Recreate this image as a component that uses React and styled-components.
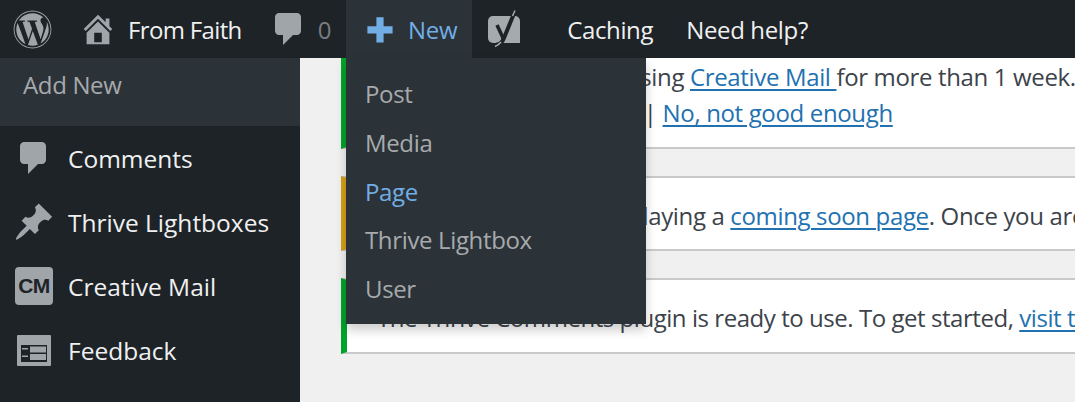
import React from "react";
import styled, { createGlobalStyle } from "styled-components";
import { FaWordpress } from "react-icons/fa";

const GlobalStyle = createGlobalStyle`
  html, body {
    margin: 0;
    padding: 0;
    width: 1075px;
    height: 402px;
    overflow: hidden;
    background: #f0f0f0;
  }
  * {
    box-sizing: border-box;
  }
`;

const Page = styled.div`
  width: 1075px;
  height: 402px;
  overflow: hidden;
  position: relative;
  font-family: "Open Sans", "Noto Sans", sans-serif;
  font-size: 24px;
  letter-spacing: -0.35px;
`;

const AdminBar = styled.div`
  height: 58px;
  background: #1d2327;
  display: flex;
  align-items: center;
`;

const BarItem = styled.div`
  height: 58px;
  display: flex;
  align-items: center;
  gap: ${(p) => p.gap || 0}px;
  margin-left: ${(p) => p.left || 0}px;
  padding: ${(p) => p.pad || 0};
  color: ${(p) => p.color || "#f0f0f1"};
  background: ${(p) => p.bg || "transparent"};
  letter-spacing: ${(p) => p.spacing || "inherit"};
`;

const BarIcon = styled.svg`
  width: ${(p) => p.size || 34}px;
  height: ${(p) => p.size || 34}px;
  fill: ${(p) => p.color || "#a0a5aa"};
  flex-shrink: 0;
`;

const Body = styled.div`
  display: flex;
  height: 344px;
`;

const Sidebar = styled.div`
  width: 300px;
  background: #1d2327;
  flex-shrink: 0;
`;

const SubMenu = styled.div`
  height: 68px;
  background: #2c3338;
  color: #a7aaad;
  padding: 10px 0 0 23px;
`;

const MenuRow = styled.div`
  height: 64px;
  display: flex;
  align-items: center;
  color: #f0f0f1;
  font-size: 24.5px;
  letter-spacing: 0;
`;

const MenuIconBox = styled.div`
  width: 68px;
  display: flex;
  justify-content: center;
`;

const CmBadge = styled.div`
  width: 38px;
  height: 38px;
  border-radius: 4px;
  background: #a0a5aa;
  color: #1d2327;
  font-family: "Liberation Sans", Arial, sans-serif;
  font-size: 21px;
  font-weight: 700;
  letter-spacing: -0.5px;
  display: flex;
  align-items: center;
  justify-content: center;
`;

const Content = styled.div`
  flex: 1;
  padding-left: 41px;
  color: #3c434a;
  overflow: hidden;
`;

const Notice = styled.div`
  background: #fff;
  border-left: 6px solid ${(p) => p.accent};
  border-bottom: 2px solid #c8c9cb;
  border-top: ${(p) => (p.first ? "0" : "2px solid #c8c9cb")};
  height: ${(p) => p.h}px;
  margin-bottom: 27px;
  padding: ${(p) => p.pad};
  white-space: nowrap;
`;

const NoticeLine = styled.div`
  line-height: 36px;
  letter-spacing: ${(p) => (p.tight ? "-0.45px" : "inherit")};
`;

const NoticeLink = styled.a`
  color: #2271b1;
  text-decoration: underline;
  text-decoration-thickness: 2px;
  text-underline-offset: 3px;
`;

const Dropdown = styled.div`
  position: absolute;
  left: 346px;
  top: 58px;
  width: 300px;
  height: 266px;
  background: #2c3338;
  box-shadow: 0 6px 10px rgba(0, 0, 0, 0.2);
  padding-top: 12px;
`;

const DropdownItem = styled.div`
  height: 48.75px;
  line-height: 48.75px;
  padding-left: 19px;
  color: ${(p) => (p.active ? "#72aee6" : "#a7aaad")};
`;

const WpIcon = styled(FaWordpress)`
  width: 39px;
  height: 39px;
  color: #a0a5aa;
  flex-shrink: 0;
`;

const YoastSvg = styled.svg`
  width: 32px;
  height: 38px;
  flex-shrink: 0;
`;

const homePath =
  "M16 8.5l1.53 1.53-1.06 1.06L10 4.62l-6.47 6.47-1.06-1.06L10 2.5l4 4v-2h2v4zm-6-2.46l6 5.99V18H4v-5.97zM12 17v-5H8v5h4z";
const commentPath =
  "M5 2h9c1.1 0 2 .9 2 2v7c0 1.1-.9 2-2 2h-2l-5 5v-5H5c-1.1 0-2-.9-2-2V4c0-1.1.9-2 2-2z";
const pinPath =
  "M10.44 3.02l1.82-1.82 6.36 6.35-1.83 1.82c-1.05-.68-2.48-.57-3.41.36l-.75.75c-.92.93-1.04 2.35-.35 3.41l-1.83 1.82-2.41-2.41-2.8 2.79c-.42.42-3.38 2.71-3.8 2.29s1.86-3.39 2.28-3.81l2.79-2.79L4.1 9.36l1.83-1.82c1.05.69 2.48.57 3.4-.36l.75-.75c.93-.92 1.05-2.35.36-3.41z";
const plusPath = "M17 7.5v5h-5v5H8v-5H3v-4h5v-5h4v5h5z";

const YoastIcon = () => (
  <YoastSvg viewBox="0 0 32 38">
    <path
      d="M6 6h21a5 5 0 0 1 5 5v22H10a5 5 0 0 1-5-5l-5 0V11a5 5 0 0 1 6-5z"
      fill="#a7aaad"
    />
    <path d="M0 28h8v5H5a5 5 0 0 1-5-5z" fill="#a7aaad" />
    <path
      d="M27 1L16 28c-1.500 4-3.500 6.500-8 7"
      fill="none"
      stroke="#1d2327"
      strokeWidth="4"
    />
    <path d="M9 15l6.500 14" fill="none" stroke="#1d2327" strokeWidth="3.500" />
    <path
      d="M27 0.500L24.500 6M13 32c-1.500 2-3 3.500-6 4.500"
      fill="none"
      stroke="#a7aaad"
      strokeWidth="1.500"
    />
  </YoastSvg>
);

const FeedbackSvg = styled.svg`
  width: 34px;
  height: 31px;
  flex-shrink: 0;
`;

const FeedbackIcon = () => (
  <FeedbackSvg viewBox="0 0 34 31">
    <rect width="34" height="31" rx="1" fill="#a0a5aa" />
    <path d="M4 10h26v17H4z" fill="#1d2327" />
    <path d="M13 11.500h16v6H13zM13 19h16v6H13z" fill="#a0a5aa" />
    <path d="M5 13h6v1.500H5zM5 20.500h6v1.500H5z" fill="#a0a5aa" />
  </FeedbackSvg>
);

const App = () => {
  return (
    <Page>
      <GlobalStyle />
      <AdminBar>
        <BarItem left={13}>
          <WpIcon />
        </BarItem>
        <BarItem left={27} gap={11} spacing="-0.65px">
          <BarIcon viewBox="0 0 20 20" size={38}>
            <path d={homePath} />
          </BarIcon>
          From Faith
        </BarItem>
        <BarItem left={27} gap={9} color="#787c82">
          <BarIcon viewBox="0 0 20 20" size={40}>
            <path d={commentPath} />
          </BarIcon>
          0
        </BarItem>
        <BarItem left={15} pad="0 15px 0 16px" gap={10} color="#72aee6" bg="#2c3338">
          <BarIcon viewBox="0 0 20 20" size={36} color="#72aee6">
            <path d={plusPath} />
          </BarIcon>
          New
        </BarItem>
        <BarItem left={16}>
          <YoastIcon />
        </BarItem>
        <BarItem left={47}>Caching</BarItem>
        <BarItem left={33}>Need help?</BarItem>
      </AdminBar>
      <Body>
        <Sidebar>
          <SubMenu>Add New</SubMenu>
          <MenuRow>
            <MenuIconBox>
              <BarIcon viewBox="0 0 20 20" size={40}>
                <path d={commentPath} />
              </BarIcon>
            </MenuIconBox>
            Comments
          </MenuRow>
          <MenuRow>
            <MenuIconBox>
              <BarIcon viewBox="0 0 20 20" size={42}>
                <path d={pinPath} />
              </BarIcon>
            </MenuIconBox>
            Thrive Lightboxes
          </MenuRow>
          <MenuRow>
            <MenuIconBox>
              <CmBadge>CM</CmBadge>
            </MenuIconBox>
            Creative Mail
          </MenuRow>
          <MenuRow>
            <MenuIconBox>
              <FeedbackIcon />
            </MenuIconBox>
            Feedback
          </MenuRow>
        </Sidebar>
        <Content>
          <Notice first accent="#00a32a" h={91} pad="1px 0 0 30px">
            <NoticeLine>
              We see you have been using <NoticeLink href="#">Creative Mail </NoticeLink>for more than 1 week.
            </NoticeLine>
            <NoticeLine>
              Care to rate it? <NoticeLink href="#">Yes, sure </NoticeLink>|{" "}
              <NoticeLink href="#">No, not good enough</NoticeLink>
            </NoticeLine>
          </Notice>
          <Notice accent="#d4a017" h={75} pad="20px 0 0 30px">
            <NoticeLine>
              This site is currently displaying a <NoticeLink href="#">coming soon page</NoticeLink>. Once you are
            </NoticeLine>
          </Notice>
          <Notice accent="#00a32a" h={76} pad="20px 0 0 30px">
            <NoticeLine tight>
              The Thrive Comments plugin is ready to use. To get started,{" "}
              <NoticeLink href="#">visit the</NoticeLink>
            </NoticeLine>
          </Notice>
        </Content>
      </Body>
      <Dropdown>
        <DropdownItem>Post</DropdownItem>
        <DropdownItem>Media</DropdownItem>
        <DropdownItem active>Page</DropdownItem>
        <DropdownItem>Thrive Lightbox</DropdownItem>
        <DropdownItem>User</DropdownItem>
      </Dropdown>
    </Page>
  );
};

export default App;
